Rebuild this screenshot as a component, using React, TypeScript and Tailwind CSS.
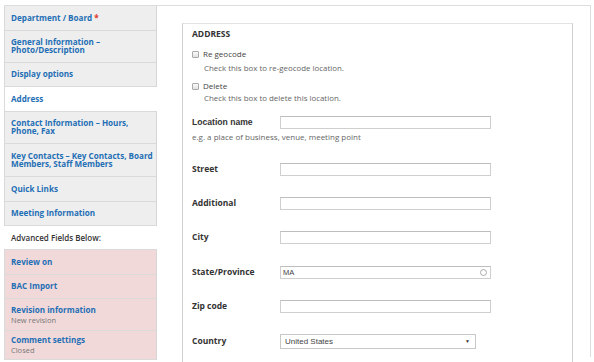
import React from "react";

type Tab = { title: string[]; sub?: string; active?: boolean; pink?: boolean; req?: boolean; h: string };

const tabsTop: Tab[] = [
  { title: ["Department / Board"], req: true, h: "h-[25px]" },
  { title: ["General Information –", "Photo/Description"], h: "h-[32px]" },
  { title: ["Display options"], h: "h-[24px]" },
  { title: ["Address"], active: true, h: "h-[25px]" },
  { title: ["Contact Information – Hours,", "Phone, Fax"], h: "h-[32px]" },
  { title: ["Key Contacts – Key Contacts, Board", "Members, Staff Members"], h: "h-[33px]" },
  { title: ["Quick Links"], h: "h-[25px]" },
  { title: ["Meeting Information"], h: "h-[24px]" },
];

const tabsBottom: Tab[] = [
  { title: ["Review on"], pink: true, h: "h-[25px]" },
  { title: ["BAC Import"], pink: true, h: "h-[24px]" },
  { title: ["Revision information"], sub: "New revision", pink: true, h: "h-[32px]" },
  { title: ["Comment settings"], sub: "Closed", pink: true, h: "h-[29px]" },
];

function TabItem({ t }: { t: Tab }) {
  const bg = t.active
    ? "bg-white"
    : t.pink
    ? "bg-[#f1d9d9] border-r border-r-[#d6d6d6]"
    : "bg-[#eeeeee] border-r border-r-[#d6d6d6]";
  return (
    <div
      className={`flex flex-col justify-center border-l border-b border-[#dadada] pl-[6px] pr-[2px] ${
        t.sub ? "" : "pb-[1px]"
      } ${t.h} ${bg}`}
    >
      {t.title.map((l, i) => (
        <div key={i} className="text-[8.1px] leading-[8px] font-bold text-[#1f6fb5] whitespace-nowrap">
          {l}
          {t.req && i === 0 ? <span className="text-[#e0331f]"> *</span> : null}
        </div>
      ))}
      {t.sub ? (
        <div className="text-[7.5px] leading-[8px] mt-[2px] text-[#777]">{t.sub}</div>
      ) : null}
    </div>
  );
}

function Checkbox() {
  return (
    <span className="inline-block w-[7px] h-[7px] border border-[#aaa] rounded-[1px] bg-gradient-to-b from-[#fafafa] to-[#e2e2e2]" />
  );
}

function Field({ label, mt, children, lucida }: { label: string; mt: string; children?: React.ReactNode; lucida?: boolean }) {
  return (
    <div className={`flex items-center h-[13px] ${mt}`}>
      <div
        className={`w-[88px] font-bold text-[#333] leading-none ${
          lucida ? "text-[8.6px] font-['Liberation_Sans',sans-serif]" : "text-[8.5px]"
        }`}
      >
        {label}
      </div>
      {children ?? <div className="w-[211px] h-[13px] border border-[#cfcfcf] border-t-[#bdbdbd] bg-white" />}
    </div>
  );
}

export default function App() {
  return (
    <div className="w-[594px] h-[362px] overflow-hidden bg-white font-['Open_Sans',sans-serif]">
      <div className="pt-[5px] pl-[4px] pr-[3px]">
        <div className="flex border-t border-r border-[#dddddd] h-[352px]">
          <div className="w-[153px] shrink-0">
            {tabsTop.map((t, i) => (
              <TabItem key={i} t={t} />
            ))}
            <div className="h-[23px] pl-[7px] flex items-center text-[8px] text-[#333] font-semibold">
              Advanced Fields Below:
            </div>
            <div className="border-t border-[#dadada]">
              {tabsBottom.map((t, i) => (
                <TabItem key={i} t={t} />
              ))}
            </div>
          </div>
          <div className="flex-1 pl-[25px] pr-[17px] pt-[17px]">
            <div className="border border-[#d0d0d0] border-t-[#e2e2e2] border-b-0 h-[340px] pl-[9px] pt-[4px]">
              <div className="h-[12px] flex items-center text-[8.5px] font-bold text-[#333]">ADDRESS</div>
              <div className="h-[12px] mt-[8px] flex items-center gap-[4px] text-[8px] text-[#444]">
                <Checkbox />
                <span>Re geocode</span>
              </div>
              <div className="h-[12px] mt-[3px] pl-[12px] flex items-center text-[7.9px] text-[#666]">
                Check this box to re-geocode location.
              </div>
              <div className="h-[12px] mt-[5px] flex items-center gap-[4px] text-[8px] text-[#444]">
                <Checkbox />
                <span>Delete</span>
              </div>
              <div className="h-[12px] mt-[1px] pl-[12px] flex items-center text-[7.9px] text-[#666]">
                Check this box to delete this location.
              </div>
              <Field label="Location name" mt="mt-[11px]" lucida />
              <div className="h-[12px] mt-[2px] flex items-center text-[8px] text-[#666]">
                e.g. a place of business, venue, meeting point
              </div>
              <Field label="Street" mt="mt-[20px]" />
              <Field label="Additional" mt="mt-[21px]" />
              <Field label="City" mt="mt-[21px]" />
              <Field label="State/Province" mt="mt-[22px]">
                <div className="w-[211px] h-[13px] border border-[#cfcfcf] border-t-[#bdbdbd] bg-white flex items-center justify-between pl-[2px] pr-[3px]">
                  <span className="text-[7.5px] text-[#444] font-['Liberation_Sans',sans-serif]">MA</span>
                  <span className="w-[7px] h-[7px] rounded-full border border-[#aaa]" />
                </div>
              </Field>
              <Field label="Zip code" mt="mt-[21px]" />
              <div className="flex items-center h-[15px] mt-[21px]">
                <div className="w-[88px] text-[8.5px] font-bold text-[#333] leading-none">Country</div>
                <div className="w-[196px] h-[15px] border border-[#c8c8c8] bg-white flex items-center justify-between pl-[4px] pr-[5px]">
                  <span className="text-[8px] text-[#444] font-['Liberation_Sans',sans-serif]">United States</span>
                  <span className="text-[5px] text-[#333] leading-none">▼</span>
                </div>
              </div>
            </div>
          </div>
        </div>
      </div>
      <div className="mt-[4px] pl-[18px] text-[16px] leading-[18px] text-[#222] whitespace-nowrap font-['Liberation_Serif',serif]">
        Figure 4: the field layout of the Address tab, with all default field settings applied
      </div>
    </div>
  );
}
